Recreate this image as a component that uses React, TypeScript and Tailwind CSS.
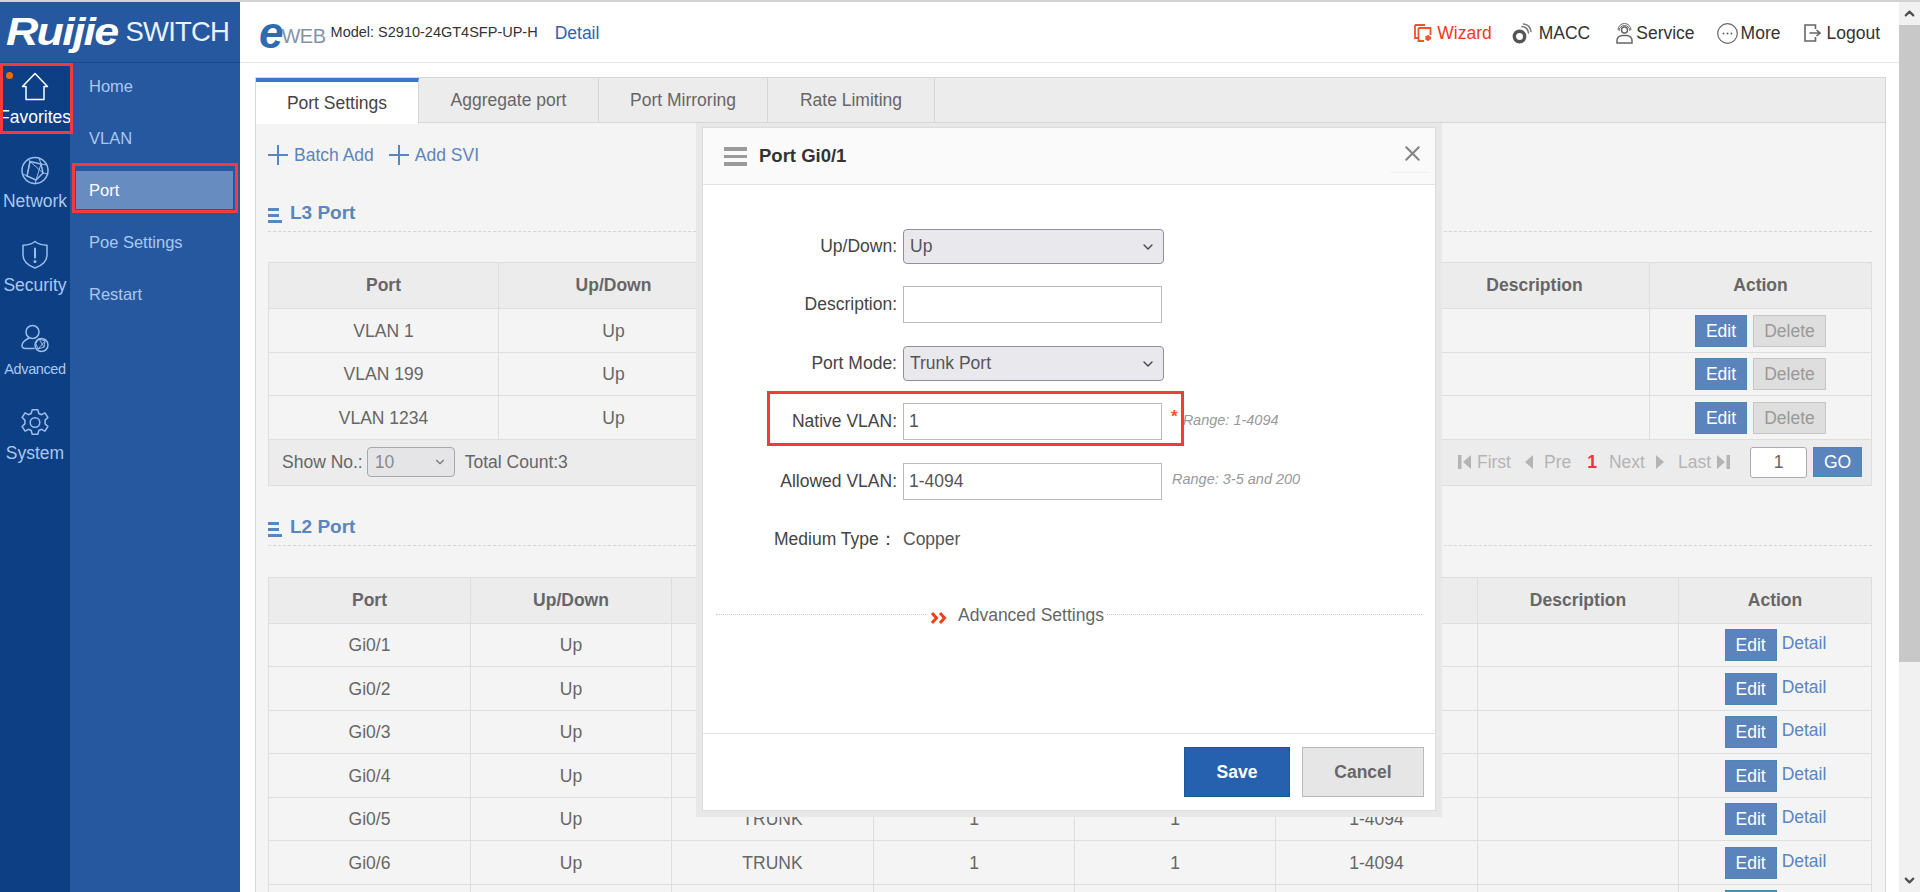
import { ChevronDown, ChevronUp, X } from 'lucide-react';
import * as React from 'react';

// ---- Data ----

const rail = [
  { label: 'Favorites', icon: 'home', text: 'text-white text-[17.5px]' },
  { label: 'Network', icon: 'network', text: 'text-[#a9c8f0] text-[17.5px]' },
  { label: 'Security', icon: 'shield', text: 'text-[#a9c8f0] text-[17.5px]' },
  { label: 'Advanced', icon: 'advanced', text: 'text-[#a9c8f0] text-[14.5px] tracking-[-0.4px]' },
  { label: 'System', icon: 'gear', text: 'text-[#a9c8f0] text-[17.5px]' },
];

const submenu = ['Home', 'VLAN', 'Port', 'Poe Settings', 'Restart'];

const l3Rows = ['VLAN 1', 'VLAN 199', 'VLAN 1234'];
const l2Rows = ['Gi0/1', 'Gi0/2', 'Gi0/3', 'Gi0/4', 'Gi0/5', 'Gi0/6', 'Gi0/7'];

const th = 'border border-[#dedede] bg-[#ececec] text-[17.5px] font-bold text-[#666] text-center';
const td = 'border border-[#dedede] pt-px text-[17.5px] text-[#666] text-center';

// ---- Icons ----

function RailIcon({ name }: { name: string }) {
  const stroke = name === 'home' ? '#ffffff' : '#9dbde8';
  return (
    <svg viewBox="0 0 28 29" className="h-[29px] w-[28px]" fill="none" stroke={stroke} strokeWidth="1.5" strokeLinecap="round" strokeLinejoin="round">
      {name === 'home' && <path d="M1.5 14.5 14 1.5l12.5 13H23v13H5v-13z" />}
      {name === 'network' && (
        <>
          <circle cx="14" cy="14.5" r="13" />
          <path d="M9 5.5 20 8l2 9-7 7-9-4z" />
          <path d="M9 5.5 6 20M20 8l6 1M22 17l5 1M15 24l-1 4M9 5.5 7 3M20 8l-2-6M6 20l-4-2M9 5.5 22 17M20 8 15 24" strokeWidth="1" />
        </>
      )}
      {name === 'shield' && (
        <>
          <path d="M14 1.500c3 2.500 7.500 3.500 12 3.800v9.700c0 6-5 10.500-12 13-7-2.500-12-7-12-13V5.300C6.500 5 11 4 14 1.500z" />
          <path d="M14 8.500v9" strokeWidth="2" />
          <circle cx="14" cy="21.500" r="0.800" fill={stroke} />
        </>
      )}
      {name === 'advanced' && (
        <>
          <circle cx="11.500" cy="8" r="6.500" />
          <path d="M8 14c-3 1.500-7 4-7 7.500 0 2 1.500 3 3.500 3H13" />
          <circle cx="20.500" cy="21" r="6.500" />
          <path d="m18 15 6 2-1 6-6 2-2-5zM18 15l5 8M24 17l-7 8" strokeWidth="1" />
        </>
      )}
      {name === 'gear' && (
        <>
          <path d="M11.200 1.800h5.600l1 3.700 2.800 1.200 3.300-1.900 3 4.700-2.800 2.600v3.800l2.800 2.600-3 4.700-3.300-1.900-2.800 1.200-1 3.700h-5.600l-1-3.700-2.800-1.200-3.300 1.900-3-4.700 2.800-2.600v-3.800L1.100 9.500l3-4.700 3.300 1.900 2.800-1.200z" />
          <circle cx="14" cy="14.500" r="4.800" />
        </>
      )}
    </svg>
  );
}

function WizardIcon() {
  return (
    <svg viewBox="0 0 18 18" className="h-[18px] w-[18px]" fill="none" stroke="#f4512c" strokeWidth="1.800">
      <path d="M1 1h10M1 1v13h3" />
      <path d="M4.500 4h12v7M4.500 4v13H10" />
      <circle cx="14" cy="14" r="2.300" fill="#f4512c" strokeWidth="1.500" strokeDasharray="1.500 0.800" />
    </svg>
  );
}

function MaccIcon() {
  return (
    <svg viewBox="0 0 20 21" className="h-[21px] w-[20px]" fill="none" stroke="#555" strokeLinecap="round">
      <circle cx="7.500" cy="13.500" r="5.200" strokeWidth="3.400" />
      <path d="M10 3.500c3.500.3 6 3 6.500 6.500M11.500 1c4 .5 7 3.500 7.500 7.500" strokeWidth="1.500" stroke="#777" />
    </svg>
  );
}

function ServiceIcon() {
  return (
    <svg viewBox="0 0 17 21" className="h-[21px] w-[17px]" fill="none" stroke="#666" strokeWidth="1.500">
      <circle cx="8.500" cy="7" r="3" />
      <path d="M3 8a5.500 5.500 0 1 1 11 0M2 7a6.500 6.500 0 0 1 13 0" strokeWidth="1" />
      <path d="M1 20v-2.500c0-3 2.500-4.500 5-5h5c2.500.5 5 2 5 5V20z" />
    </svg>
  );
}

function MoreIcon() {
  return (
    <svg viewBox="0 0 21 21" className="h-[21px] w-[21px]" fill="none" stroke="#666" strokeWidth="1.200">
      <circle cx="10.500" cy="10.500" r="9.800" />
      <circle cx="6.500" cy="10.500" r="1" fill="#666" stroke="none" />
      <circle cx="10.500" cy="10.500" r="1" fill="#666" stroke="none" />
      <circle cx="14.500" cy="10.500" r="1" fill="#666" stroke="none" />
    </svg>
  );
}

function LogoutIcon() {
  return (
    <svg viewBox="0 0 17 18" className="h-[18px] w-[17px]" fill="none" stroke="#666" strokeWidth="1.600">
      <path d="M11.500 5V1H1v16h10.500v-4" />
      <path d="M5.500 9h10M12.500 6l3.500 3-3.500 3" />
    </svg>
  );
}

function Plus() {
  return (
    <svg viewBox="0 0 20 20" className="h-5 w-5" fill="none" stroke="#5b85bd" strokeWidth="2">
      <path d="M10 0v20M0 10h20" />
    </svg>
  );
}

// ---- Small parts ----

function SectionTitle({ title }: { title: string }) {
  return (
    <div className="flex h-[36px] items-center gap-[8px] border-b border-dashed border-[#d4d4d4]">
      <div className="flex w-[14px] flex-col gap-[3px] pt-[4px]">
        <span className="h-[3px] w-[11px] bg-[#5b85bd]" />
        <span className="h-[3px] w-[11px] bg-[#5b85bd]" />
        <span className="h-[3px] w-[14px] bg-[#5b85bd]" />
      </div>
      <span className="text-[19px] font-bold text-[#5b85bd]">{title}</span>
    </div>
  );
}

function EditButton() {
  return (
    <button className="h-[32px] w-[52px] border border-[#4c86b3] bg-[#5b84bd] text-[17.5px] text-white">Edit</button>
  );
}

function SelectBox({ value, className }: { value: string; className: string }) {
  return (
    <div className={`relative ${className}`}>
      <select
        defaultValue={value}
        className="h-full w-full appearance-none rounded-[4px] border border-[#8f8f9d] bg-[#e9e9ed] pl-[6px] text-[17.5px] text-[#555]"
      >
        <option>{value}</option>
      </select>
      <ChevronDown className="pointer-events-none absolute right-[8px] top-1/2 h-[16px] w-[16px] -translate-y-1/2 text-[#444]" strokeWidth={2} />
    </div>
  );
}

function FormLabel({ children }: { children: React.ReactNode }) {
  return <label className="w-[195px] shrink-0 pr-[6px] text-right text-[17.5px] text-[#444]">{children}</label>;
}

function FormInput({ value }: { value: string }) {
  return (
    <input
      defaultValue={value}
      className="h-[37px] w-[259px] border border-[#bbbbbb] bg-white pl-[5px] text-[17.5px] text-[#555]"
    />
  );
}

// ---- Tables ----

function L3Table() {
  return (
    <div>
      <table className="w-[1604px] table-fixed border-collapse">
        <thead>
          <tr className="h-[46px]">
            <th className={`${th} w-[230px]`}>Port</th>
            <th className={`${th} w-[230px]`}>Up/Down</th>
            <th className={`${th} w-[230px]`} />
            <th className={`${th} w-[230px]`} />
            <th className={`${th} w-[231px]`} />
            <th className={`${th} w-[230px]`}>Description</th>
            <th className={th}>Action</th>
          </tr>
        </thead>
        <tbody>
          {l3Rows.map((name) => (
            <tr key={name} className="h-[43.500px]">
              <td className={td}>{name}</td>
              <td className={td}>Up</td>
              <td className={td} />
              <td className={td} />
              <td className={td} />
              <td className={td} />
              <td className={td}>
                <div className="flex justify-center gap-[6px]">
                  <EditButton />
                  <button className="h-[32px] w-[73px] border border-[#c6c6c6] bg-[#dedede] text-[17.5px] text-[#999]">Delete</button>
                </div>
              </td>
            </tr>
          ))}
        </tbody>
      </table>
      <div className="flex h-[46px] w-[1604px] items-center border border-t-0 border-[#dedede] bg-[#ececec] pl-[13px] text-[17.5px] text-[#666]">
        <span>Show No.:</span>
        <div className="relative ml-[4px] h-[30px] w-[88px]">
          <select defaultValue="10" className="h-full w-full appearance-none rounded-[4px] border border-[#a8a8a8] bg-[#e5e5e8] pl-[7px] text-[17.5px] text-[#8a8a8a]">
            <option>10</option>
          </select>
          <ChevronDown className="pointer-events-none absolute right-[8px] top-1/2 h-[14px] w-[14px] -translate-y-1/2 text-[#777]" />
        </div>
        <span className="ml-[10px]">Total Count:3</span>
        <div className="ml-auto flex items-center text-[#b4b4b4]">
          <svg viewBox="0 0 13 14" className="h-[14px] w-[13px]" fill="#b4b4b4"><path d="M0 0h3.500v14H0zM13 0v14L5 7z" /></svg>
          <span className="ml-[6px]">First</span>
          <svg viewBox="0 0 8 14" className="ml-[14px] h-[14px] w-[8px]" fill="#b4b4b4"><path d="M8 0v14L0 7z" /></svg>
          <span className="ml-[11px]">Pre</span>
          <span className="ml-[16px] font-bold text-[#f0323c]">1</span>
          <span className="ml-[12px]">Next</span>
          <svg viewBox="0 0 8 14" className="ml-[11px] h-[14px] w-[8px]" fill="#b4b4b4"><path d="M0 0v14l8-7z" /></svg>
          <span className="ml-[14px]">Last</span>
          <svg viewBox="0 0 13 14" className="ml-[6px] h-[14px] w-[13px]" fill="#b4b4b4"><path d="M13 0H9.500v14H13zM0 0v14l8-7z" /></svg>
        </div>
        <input defaultValue="1" className="ml-[20px] h-[31px] w-[57px] rounded-[3px] border border-[#aaaab4] bg-white text-center text-[17.5px] text-[#666]" />
        <button className="ml-[6px] mr-[9px] h-[30px] w-[49px] border border-[#4c86b3] bg-[#5b84bd] text-[17.5px] text-white">GO</button>
      </div>
    </div>
  );
}

function L2Table() {
  return (
    <table className="w-[1604px] table-fixed border-collapse">
      <thead>
        <tr className="h-[46px]">
          <th className={`${th} w-[202px]`}>Port</th>
          <th className={`${th} w-[201px]`}>Up/Down</th>
          <th className={`${th} w-[202px]`} />
          <th className={`${th} w-[201px]`} />
          <th className={`${th} w-[201px]`} />
          <th className={`${th} w-[202px]`} />
          <th className={`${th} w-[201px]`}>Description</th>
          <th className={th}>Action</th>
        </tr>
      </thead>
      <tbody>
        {l2Rows.map((name) => (
          <tr key={name} className="h-[43.500px]">
            <td className={td}>{name}</td>
            <td className={td}>Up</td>
            <td className={td}>TRUNK</td>
            <td className={td}>1</td>
            <td className={td}>1</td>
            <td className={td}>1-4094</td>
            <td className={td} />
            <td className={td}>
              <div className="flex items-start justify-center gap-[5px] pl-[1px]">
                <EditButton />
                <a className="text-[17.5px] leading-[28px] text-[#5b85c4]">Detail</a>
              </div>
            </td>
          </tr>
        ))}
      </tbody>
    </table>
  );
}

// ---- Modal ----

function PortModal() {
  return (
    <div className="absolute left-[696px] top-[123px] h-[694px] w-[746px] bg-[#e8e8e8] px-[6px] pb-[6px] pt-[4px]">
      <div className="flex h-full flex-col border border-[#dcdcdc] bg-white">
        <div className="relative flex h-[57px] shrink-0 items-center border-b border-[#e2e2e2] bg-[#fafafa] pl-[21px]">
          <div className="flex w-[23px] flex-col gap-[4px]">
            <span className="h-[4px] bg-[#9a9a9a]" />
            <span className="h-[3px] bg-[#9a9a9a]" />
            <span className="h-[4px] bg-[#9a9a9a]" />
          </div>
          <span className="ml-[12px] text-[18.5px] font-bold text-[#333]">Port Gi0/1</span>
          <X className="absolute right-[10px] top-[13px] h-[25px] w-[25px] text-[#858585]" strokeWidth={2} />
          <span className="absolute right-[5px] top-[44px] h-px w-[40px] bg-[#f0f0f0]" />
        </div>

        <div className="flex flex-1 flex-col pt-[44px]">
          <div className="flex h-[35px] items-center pl-[5px]">
            <FormLabel>Up/Down:</FormLabel>
            <SelectBox value="Up" className="h-[35px] w-[261px]" />
          </div>
          <div className="mt-[22px] flex items-center pl-[5px]">
            <FormLabel>Description:</FormLabel>
            <FormInput value="" />
          </div>
          <div className="mt-[23px] flex h-[35px] items-center pl-[5px]">
            <FormLabel>Port Mode:</FormLabel>
            <SelectBox value="Trunk Port" className="h-[35px] w-[261px]" />
          </div>
          <div className="relative mt-[22px] flex items-center pl-[5px]">
            <div className="absolute bottom-[-6px] left-[64px] top-[-12px] w-[417px] border-[3px] border-[#f43a3a]" />
            <FormLabel>Native VLAN:</FormLabel>
            <FormInput value="1" />
            <span className="ml-[9px] mt-[-10px] text-[17px] font-bold text-[#f4512c]">*</span>
            <span className="ml-[5px] mt-[-2px] text-[14.500px] italic text-[#999]">Range: 1-4094</span>
          </div>
          <div className="mt-[23px] flex items-center pl-[5px]">
            <FormLabel>Allowed VLAN:</FormLabel>
            <FormInput value="1-4094" />
            <span className="ml-[10px] mt-[-4px] text-[14.500px] italic text-[#999]">Range: 3-5 and 200</span>
          </div>
          <div className="mt-[29px] flex h-[20px] items-center pl-[5px] text-[17.5px] text-[#444]">
            <span className="w-[195px] shrink-0 whitespace-nowrap pl-[66px]">Medium Type：</span>
            <span className="text-[#555]">Copper</span>
          </div>
          <div className="relative mx-[13px] mt-[65px] flex h-[2px] items-center border-t border-dotted border-[#c9c9c9]">
            <div className="absolute left-[210px] flex items-center bg-white pl-[4px] pr-[2px]">
              <svg viewBox="0 0 18 12" className="mt-[5px] h-[12px] w-[18px]" fill="none" stroke="#ee3f17" strokeWidth="3">
                <path d="m2 1 4.500 5L2 11M10 1l4.500 5-4.500 5" />
              </svg>
              <span className="ml-[10px] text-[17.5px] text-[#666]">Advanced Settings</span>
            </div>
          </div>
        </div>

        <div className="flex h-[77px] shrink-0 items-start justify-end gap-[12px] border-t border-[#e2e2e2] pr-[11px] pt-[13px]">
          <button className="h-[50px] w-[106px] border border-[#1a5a96] bg-[#2561ae] text-[17.5px] font-bold text-white">Save</button>
          <button className="h-[50px] w-[122px] border border-[#bbbbbb] bg-[#e6e6e6] text-[17.5px] font-bold text-[#666]">Cancel</button>
        </div>
      </div>
    </div>
  );
}

// ---- Page ----

export default function App() {
  return (
    <div className="relative flex h-[892px] w-[1920px] flex-col overflow-hidden bg-white font-[Liberation_Sans,sans-serif]">
      <div className="h-[2px] shrink-0 bg-[#d2d2d2]" />
      <div className="flex min-h-0 flex-1">
        {/* sidebar */}
        <aside className="flex w-[240px] shrink-0 flex-col bg-[#26589f]">
          <div className="flex h-[61px] shrink-0 items-center border-b border-[#1b4a8e] pl-[6px] text-white">
            <span className="origin-left scale-x-[1.18] text-[38px] font-bold italic leading-none tracking-[-1.5px] text-white">Ruijie</span>
            <span className="ml-[25px] text-[27.5px] tracking-[-0.8px] text-[#eaf1fa]">SWITCH</span>
          </div>
          <div className="flex min-h-0 flex-1">
            <nav className="relative w-[70px] shrink-0 bg-[#0d3f85]">
              {rail.map((item, i) => (
                <div key={item.label} className="flex h-[84px] flex-col items-center pt-[9px]">
                  <RailIcon name={item.icon} />
                  <span className={`mt-[6px] whitespace-nowrap leading-[20px] ${item.text}`}>{item.label}</span>
                  {i === 0 && <span className="absolute left-[6px] top-[9px] h-[7px] w-[7px] rounded-full bg-[#f26a0f]" />}
                </div>
              ))}
              <div className="absolute left-0 top-0 h-[71px] w-[73px] border-[3px] border-[#f43a3a]" />
            </nav>
            <ul className="flex-1 pt-[4px]">
              {submenu.map((name) => (
                <li
                  key={name}
                  className={
                    name === 'Port'
                      ? 'relative mb-[14px] ml-[6px] flex h-[38px] w-[157px] items-center bg-[#678cc0] pl-[13px] text-[16.5px] text-white'
                      : 'mb-[14px] ml-[6px] flex h-[38px] w-[157px] items-center pl-[13px] text-[16.5px] text-[#a9c8f0]'
                  }
                >
                  {name}
                  {name === 'Port' && (
                    <span className="absolute -bottom-1 -left-1 -right-[5px] -top-2 border-[3px] border-[#f43a3a]" />
                  )}
                </li>
              ))}
            </ul>
          </div>
        </aside>

        {/* main */}
        <div className="flex min-w-0 flex-1 flex-col">
          <header className="flex h-[61px] shrink-0 items-center border-b border-[#e3e7ee] pl-[19px] pr-[19px] pt-[2px]">
            <span className="text-[44px] font-bold italic leading-none text-[#2f6bb3]">e</span>
            <span className="ml-[-2px] mt-[6px] text-[20px] tracking-[-0.5px] text-[#8294a8]">WEB</span>
            <span className="ml-[5px] text-[14.5px] text-[#333]">Model: S2910-24GT4SFP-UP-H</span>
            <a className="ml-[17px] text-[17.5px] text-[#2b64b0]">Detail</a>
            <div className="ml-auto flex items-center text-[17.5px] text-[#333]">
              <WizardIcon />
              <span className="ml-[5px] text-[#f5371b]">Wizard</span>
              <span className="ml-[20px]"><MaccIcon /></span>
              <span className="ml-[7px]">MACC</span>
              <span className="ml-[26px]"><ServiceIcon /></span>
              <span className="ml-[3px]">Service</span>
              <span className="ml-[22px]"><MoreIcon /></span>
              <span className="ml-[3px]">More</span>
              <span className="ml-[24px]"><LogoutIcon /></span>
              <span className="ml-[5px]">Logout</span>
            </div>
          </header>

          <div className="ml-[15px] mr-[13px] mt-[14px] flex min-h-0 flex-1 flex-col border-x border-t border-[#d6d6d6] bg-[#f4f4f4]">
            <div className="flex h-[45px] shrink-0 border-b border-[#d6d6d6] bg-[#ececec] text-[17.5px] text-[#666]">
              <div className="-mb-px flex h-[46px] w-[163px] items-center justify-center border-t-[4px] border-r border-t-[#3a78d0] border-r-[#d6d6d6] bg-white text-[#444]">Port Settings</div>
              <div className="flex w-[180px] items-center justify-center border-r border-[#d6d6d6]">Aggregate port</div>
              <div className="flex w-[169px] items-center justify-center border-r border-[#d6d6d6]">Port Mirroring</div>
              <div className="flex w-[167px] items-center justify-center border-r border-[#d6d6d6]">Rate Limiting</div>
            </div>
            <div className="pl-[12px]">
              <div className="mt-[22px] flex h-[20px] items-center text-[17.5px] text-[#5b85bd]">
                <Plus />
                <span className="ml-[6px]">Batch Add</span>
                <span className="ml-[15px]"><Plus /></span>
                <span className="ml-[6px]">Add SVI</span>
              </div>
              <div className="mt-[31px] w-[1604px]"><SectionTitle title="L3 Port" /></div>
              <div className="mt-[30px]"><L3Table /></div>
              <div className="mt-[24px] w-[1604px]"><SectionTitle title="L2 Port" /></div>
              <div className="mt-[31px]"><L2Table /></div>
            </div>
          </div>
        </div>

        {/* scrollbar */}
        <div className="flex w-[21px] shrink-0 flex-col bg-[#f1f1f1]">
          <div className="flex h-[23px] items-center justify-center"><ChevronUp className="h-[15px] w-[15px] text-[#505050]" strokeWidth={3.500} /></div>
          <div className="h-[637px] bg-[#c8c8c8]" />
          <div className="mt-auto flex h-[23px] items-center justify-center"><ChevronDown className="h-[15px] w-[15px] text-[#505050]" strokeWidth={3.500} /></div>
        </div>
      </div>

      <PortModal />
    </div>
  );
}
